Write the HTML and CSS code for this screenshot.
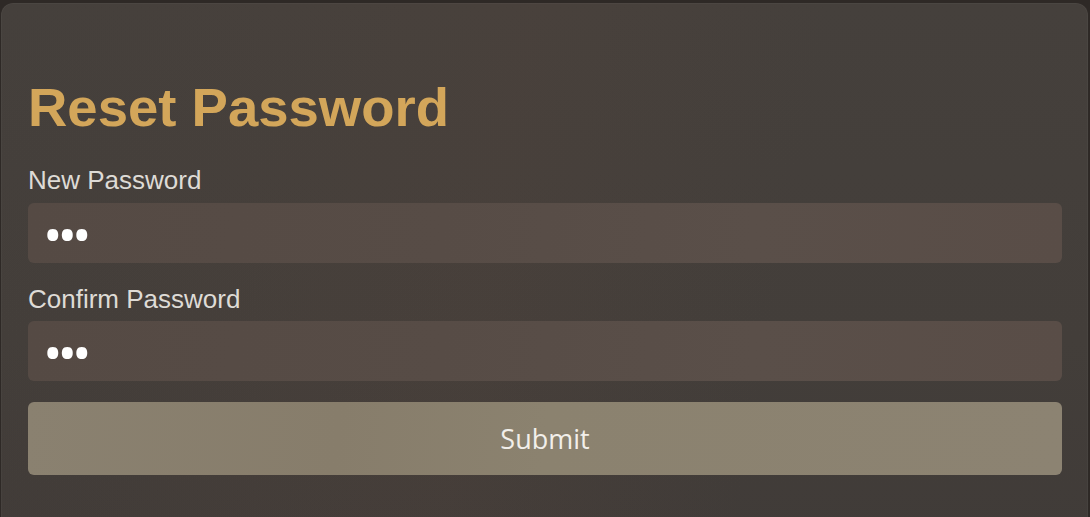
FILE: index.html
```html
<!DOCTYPE html>
<html lang="en">
<head>
<meta charset="utf-8">
<title>Reset Password</title>
<link rel="stylesheet" href="styles.css">
</head>
<body>
<main class="card">
  <h1 class="title">Reset Password</h1>
  <form class="form">
    <label class="label" for="np">New Password</label>
    <input class="field" id="np" type="password" value="abc">
    <label class="label second" for="cp">Confirm Password</label>
    <input class="field" id="cp" type="password" value="abc">
    <button class="submit" type="button">Submit</button>
  </form>
</main>
</body>
</html>
```
FILE: styles.css
```css
html, body {
  margin: 0;
  padding: 0;
  height: 100%;
  background: #2e2926;
  overflow: hidden;
}
body {
  padding: 3px 2px 0 1px;
  box-sizing: border-box;
  font-family: "Liberation Sans", Arial, sans-serif;
}
.card {
  min-height: 560px;
  box-sizing: border-box;
  border-radius: 12px;
  padding: 75px 26px 0 27px;
  background:
    linear-gradient(100deg, rgba(0,0,0,0) 0%, rgba(90,70,60,0.18) 45%, rgba(0,0,0,0) 70%),
    linear-gradient(180deg, #45403c 0%, #433e3a 60%, #403b38 100%);
  box-shadow: inset 0 0 0 1px rgba(255,255,255,0.03);
}
.title {
  margin: 0;
  font-size: 54.5px;
  font-weight: bold;
  line-height: 60px;
  color: #d3a65a;
}
.form {
  display: flex;
  flex-direction: column;
  margin-top: 27px;
}
.label {
  font-size: 26px;
  line-height: 30px;
  color: #dedbd6;
  margin-bottom: 8px;
}
.label.second {
  margin-top: 21px;
  margin-bottom: 7px;
}
.field {
  height: 60px;
  box-sizing: border-box;
  border: none;
  outline: none;
  border-radius: 6px;
  padding: 0 15px;
  font-family: "Open Sans", sans-serif;
  font-size: 52px;
  letter-spacing: -5px;
  color: #ffffff;
  background: linear-gradient(95deg, #554a44 0%, #574c46 40%, #5a4f49 70%, #594d47 100%);
}
.submit {
  margin-top: 21px;
  height: 73px;
  border: none;
  border-radius: 6px;
  font-family: "Open Sans", "Noto Sans", sans-serif;
  font-size: 27px;
  color: #f2efea;
  background: linear-gradient(95deg, #8a8170 0%, #877d6b 30%, #8b826f 50%, #8c8372 100%);
  cursor: pointer;
}
```
